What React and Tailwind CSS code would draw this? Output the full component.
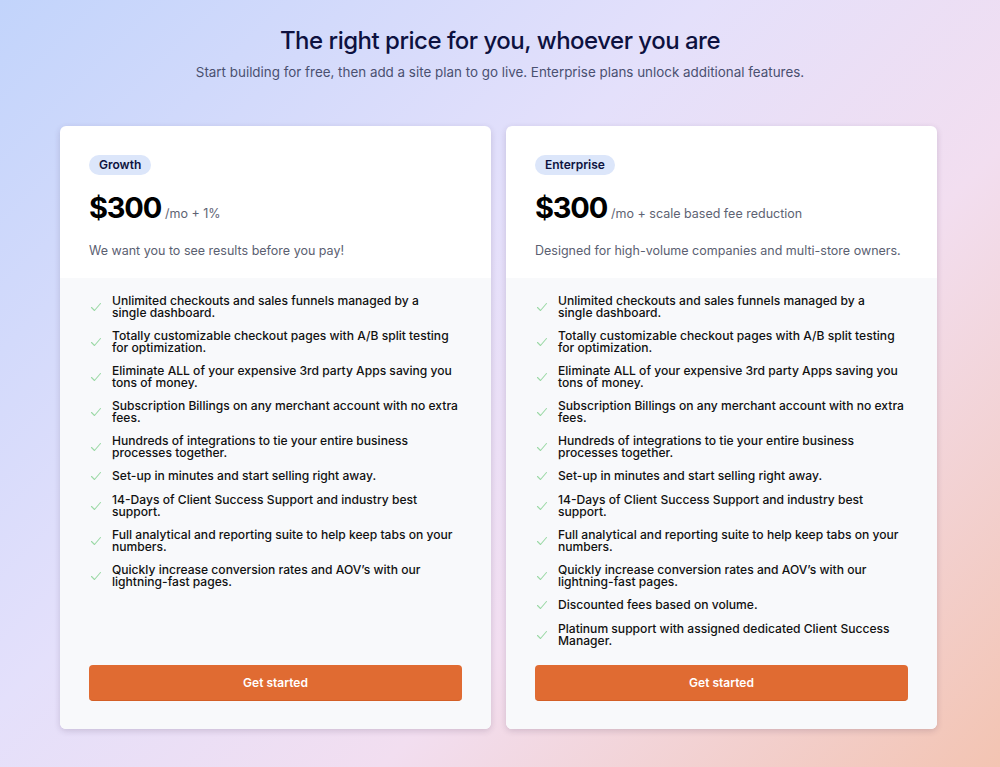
const common = [
  ["Unlimited checkouts and sales funnels managed by a", "single dashboard."],
  ["Totally customizable checkout pages with A/B split testing", "for optimization."],
  ["Eliminate ALL of your expensive 3rd party Apps saving you", "tons of money."],
  ["Subscription Billings on any merchant account with no extra", "fees."],
  ["Hundreds of integrations to tie your entire business", "processes together."],
  ["Set-up in minutes and start selling right away."],
  ["14-Days of Client Success Support and industry best", "support."],
  ["Full analytical and reporting suite to help keep tabs on your", "numbers."],
  ["Quickly increase conversion rates and AOV’s with our", "lightning-fast pages."],
];

const plans = [
  {
    name: "Growth",
    suffix: "/mo + 1%",
    blurb: "We want you to see results before you pay!",
    features: common,
  },
  {
    name: "Enterprise",
    suffix: "/mo + scale based fee reduction",
    blurb: "Designed for high-volume companies and multi-store owners.",
    features: [
      ...common,
      ["Discounted fees based on volume."],
      ["Platinum support with assigned dedicated Client Success", "Manager."],
    ],
  },
];

function Check() {
  return (
    <svg width="12" height="12" viewBox="0 0 12 12" fill="none" className="shrink-0">
      <path d="M1.5 6.5L4.5 9.5L10.5 2.5" stroke="#9bd9a6" strokeWidth="1.1" strokeLinecap="round" strokeLinejoin="round" />
    </svg>
  );
}

function PlanCard({ plan }) {
  return (
    <div className="flex flex-col bg-white rounded-md shadow-[0_2px_6px_rgba(60,40,80,0.18)] overflow-hidden">
      <div className="px-[29px] pt-[29px] pb-[19px]">
        <div className="flex">
          <span className="rounded-full bg-[#dce6fa] px-[10px] py-[3px] text-[12px] leading-[14px] font-semibold text-[#0e1340]">
            {plan.name}
          </span>
        </div>
        <div className="mt-[16px] flex items-baseline gap-[4px] h-[34px]">
          <span className="text-[29px] leading-[34px] font-bold text-black tracking-[-1.2px]">$300</span>
          <span className="text-[12.5px] text-[#5e6373]">{plan.suffix}</span>
        </div>
        <p className="mt-[18px] text-[12.5px] leading-[16px] text-[#5b6071]">{plan.blurb}</p>
      </div>
      <div className="flex flex-1 flex-col bg-[#f8f9fb] px-[29px] pt-[17px] pb-[28px]">
        <ul className="flex flex-col gap-[12px] mb-[19px]">
          {plan.features.map((lines) => (
            <li key={lines[0]} className="flex items-center gap-[10px] pl-[1px]">
              <Check />
              <span className="w-[360px] whitespace-nowrap text-[12.1px] leading-[11.5px] font-medium text-[#111111]">
                {lines[0]}
                {lines[1] && (
                  <>
                    <br />
                    {lines[1]}
                  </>
                )}
              </span>
            </li>
          ))}
        </ul>
        <button className="mt-auto h-[36px] w-full rounded-[4px] bg-[#e06b32] border-b border-[#d35f26] text-[12px] font-semibold text-white">
          Get started
        </button>
      </div>
    </div>
  );
}

export default function App() {
  return (
    <div
      className="min-h-[767px] w-full bg-[linear-gradient(135deg,#c2d4fb_0%,#e4e0fb_40%,#f2def0_65%,#f3c4b2_100%)] font-['Inter',sans-serif]"
    >
      <div className="pt-[27px] text-center">
        <h1 className="text-[24px] leading-[28px] font-medium text-[#0d1140] tracking-[-0.5px]">
          The right price for you, whoever you are
        </h1>
        <p className="mt-[9px] text-[13.4px] leading-[16px] text-[#4a5070]">
          Start building for free, then add a site plan to go live. Enterprise plans unlock additional features.
        </p>
      </div>
      <div className="mt-[46px] grid grid-cols-[431px_431px] gap-[15px] pl-[60px] pb-[38px]">
        {plans.map((p) => (
          <PlanCard key={p.name} plan={p} />
        ))}
      </div>
    </div>
  );
}
